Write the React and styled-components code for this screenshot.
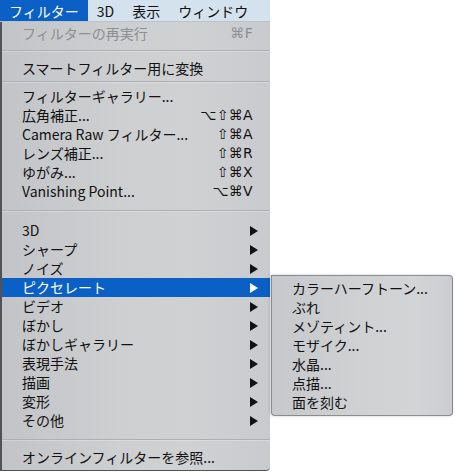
import React from "react";
import styled, { createGlobalStyle } from "styled-components";

const GlobalStyle = createGlobalStyle`
  html, body {
    margin: 0;
    padding: 0;
    background: #ffffff;
  }
  body {
    font-family: "Noto Sans CJK JP", "DejaVu Sans", sans-serif;
    font-size: 14px;
  }
`;

const Page = styled.div`
  width: 455px;
  height: 473px;
  overflow: hidden;
  display: flex;
  flex-direction: column;
  align-items: flex-start;
`;

const MenuBar = styled.div`
  width: 270px;
  height: 22px;
  display: flex;
  align-items: stretch;
  overflow: hidden;
  background: #d3e2ec;
  border-bottom: 1px solid #b9c3c9;
  box-sizing: border-box;
`;

const BarItem = styled.div`
  flex: none;
  display: flex;
  align-items: center;
  padding: 0 9px;
  line-height: 22px;
  font-size: 14px;
  color: ${(p) => (p.$active ? "#ffffff" : "#111111")};
  background: ${(p) => (p.$active ? "#0b60c6" : "transparent")};
`;

const Menu = styled.div`
  width: 270px;
  box-sizing: border-box;
  padding: 2px 0 3px;
  border-left: 2px solid #505255;
  border-bottom: 1px solid #505255;
  border-bottom-right-radius: 4px;
  background: linear-gradient(90deg, #c2c4c7 0%, #cdcfd1 45%, #cfd1d3 70%, #c8cacd 100%);
`;

const Row = styled.div`
  position: relative;
  height: 19px;
  display: flex;
  align-items: center;
  padding: 0 12px 0 20px;
  line-height: 19px;
  font-size: 14px;
  white-space: nowrap;
  color: ${(p) => (p.$disabled ? "#8d8f92" : p.$active ? "#ffffff" : "#111111")};
  background: ${(p) => (p.$active ? "#0b60c6" : "transparent")};
`;

const Label = styled.span`
  flex: 1;
`;

const Shortcut = styled.span`
  margin-right: 5px;
  font-family: "DejaVu Sans", "Liberation Sans", sans-serif;
  font-size: 14px;
  letter-spacing: 0.3px;
  color: inherit;
`;

const Arrow = styled.span`
  width: 0;
  height: 0;
  border-top: 5px solid transparent;
  border-bottom: 5px solid transparent;
  border-left: 8px solid ${(p) => (p.$active ? "#ffffff" : "#111111")};
`;

const Separator = styled.div`
  margin: ${(p) => p.$before}px 0 ${(p) => p.$after}px;
  height: 1px;
  background: #adafb2;
  box-shadow: 0 1px 0 rgba(255, 255, 255, 0.25);
`;

const SubMenu = styled.div`
  position: absolute;
  left: calc(100% + 1px);
  top: -3px;
  width: 182px;
  box-sizing: border-box;
  padding: 3px 0;
  border-radius: 4px;
  border: 1px solid rgba(60, 60, 60, 0.45);
  border-top-left-radius: 0;
  background: linear-gradient(90deg, #c6c8cb 0%, #cfd1d3 50%, #d2d4d6 80%, #cbcdd0 100%);
  box-shadow: -1px 0 3px rgba(0, 0, 0, 0.2);
  color: #111111;
`;

const SubRow = styled.div`
  height: 19px;
  line-height: 19px;
  padding-left: 20px;
  font-size: 14px;
  white-space: nowrap;
`;

const editItems = [
  ["フィルターギャラリー...", ""],
  ["広角補正...", "⌥⇧⌘A"],
  ["Camera Raw フィルター...", "⇧⌘A"],
  ["レンズ補正...", "⇧⌘R"],
  ["ゆがみ...", "⇧⌘X"],
  ["Vanishing Point...", "⌥⌘V"],
];

const groups = [
  "3D",
  "シャープ",
  "ノイズ",
  "ピクセレート",
  "ビデオ",
  "ぼかし",
  "ぼかしギャラリー",
  "表現手法",
  "描画",
  "変形",
  "その他",
];

const pixelate = [
  "カラーハーフトーン...",
  "ぶれ",
  "メゾティント...",
  "モザイク...",
  "水晶...",
  "点描...",
  "面を刻む",
];

export default function App() {
  return (
    <>
      <GlobalStyle />
      <Page>
        <MenuBar>
          <BarItem $active>フィルター</BarItem>
          <BarItem>3D</BarItem>
          <BarItem>表示</BarItem>
          <BarItem>ウィンドウ</BarItem>
        </MenuBar>
        <Menu>
          <Row $disabled>
            <Label>フィルターの再実行</Label>
            <Shortcut>⌘F</Shortcut>
          </Row>
          <Separator $before={7} $after={8} />
          <Row>
            <Label>スマートフィルター用に変換</Label>
          </Row>
          <Separator $before={3} $after={5} />
          {editItems.map(([label, key]) => (
            <Row key={label}>
              <Label>{label}</Label>
              {key && <Shortcut>{key}</Shortcut>}
            </Row>
          ))}
          <Separator $before={9} $after={10} />
          {groups.map((g) => {
            const active = g === "ピクセレート";
            return (
              <Row key={g} $active={active}>
                <Label>{g}</Label>
                <Arrow $active={active} />
                {active && (
                  <SubMenu>
                    {pixelate.map((s) => (
                      <SubRow key={s}>{s}</SubRow>
                    ))}
                  </SubMenu>
                )}
              </Row>
            );
          })}
          <Separator $before={9} $after={8} />
          <Row>
            <Label>オンラインフィルターを参照...</Label>
          </Row>
        </Menu>
      </Page>
    </>
  );
}
